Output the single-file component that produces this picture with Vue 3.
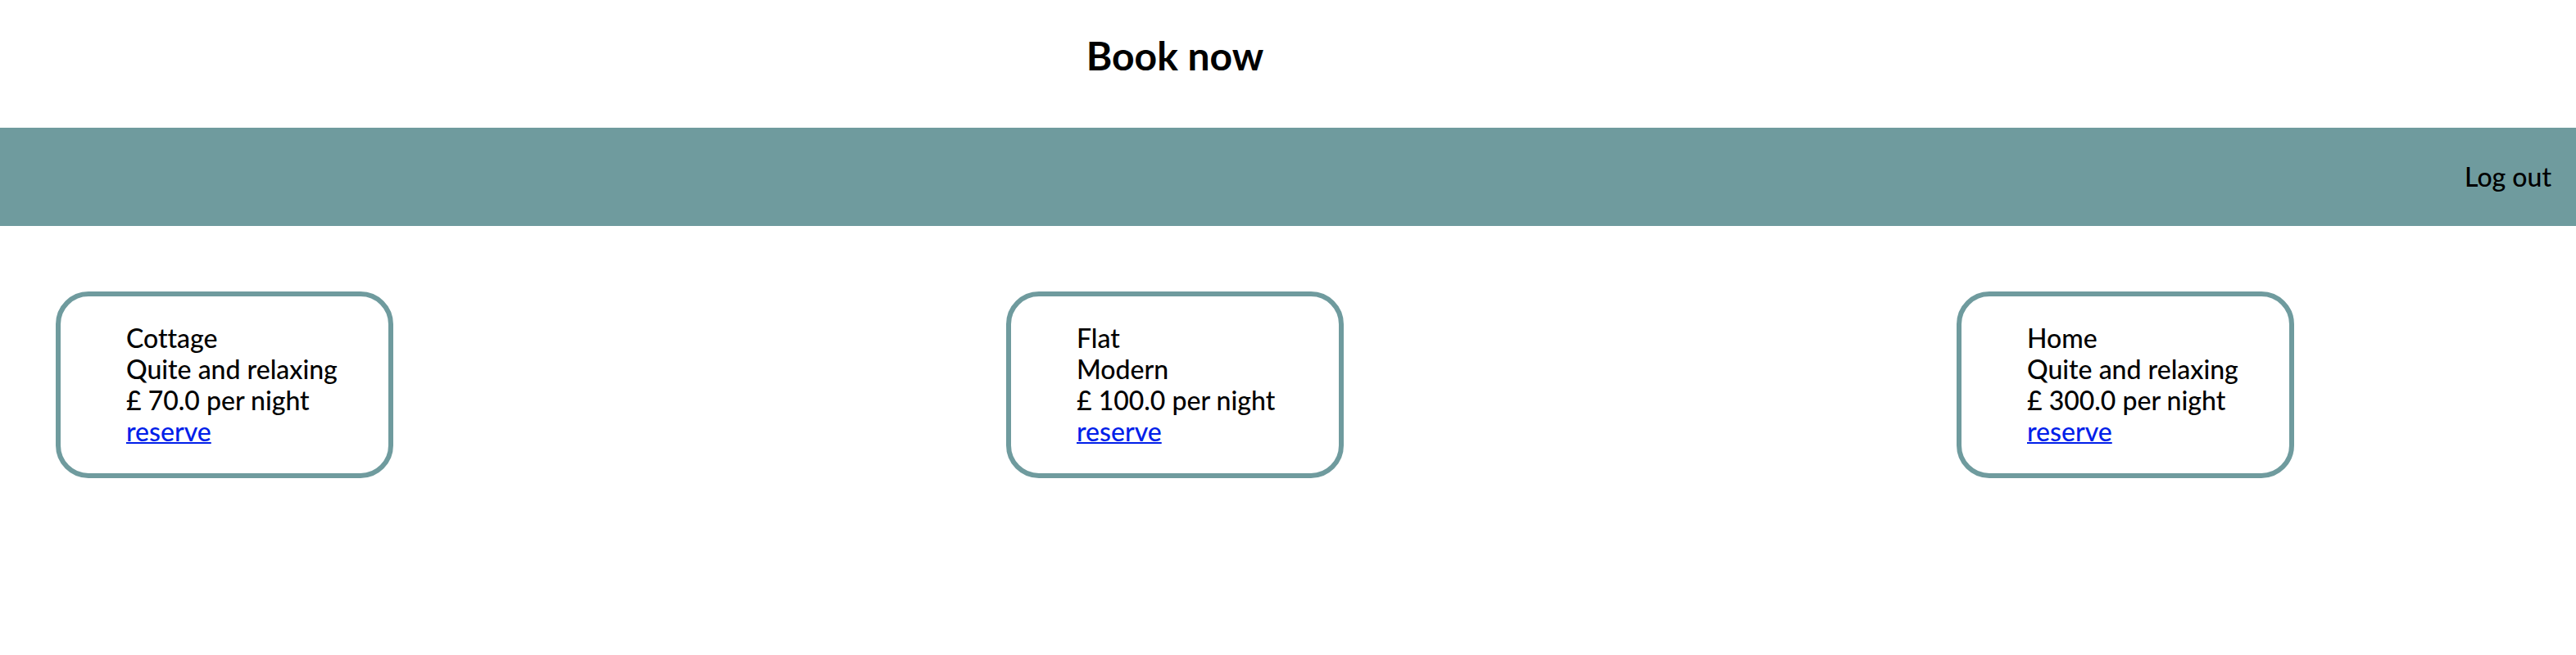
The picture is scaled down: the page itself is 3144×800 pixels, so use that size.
<script setup>
const rooms = [
  { id: 1, name: 'Cottage', description: 'Quite and relaxing', price: '70.0' },
  { id: 2, name: 'Flat', description: 'Modern', price: '100.0' },
  { id: 3, name: 'Home', description: 'Quite and relaxing', price: '300.0' },
]
</script>

<template>
  <div class="page">
    <header class="header">
      <h1 class="title">Book now</h1>
    </header>
    <nav class="bar">
      <a class="logout" href="#">Log out</a>
    </nav>
    <main class="rooms">
      <article v-for="room in rooms" :key="room.id" class="card">
        <div>{{ room.name }}</div>
        <div>{{ room.description }}</div>
        <div>£ {{ room.price }} per night</div>
        <a class="reserve" href="#">reserve</a>
      </article>
    </main>
  </div>
</template>

<style>
body {
  margin: 0;
  background: #ffffff;
}
</style>

<style scoped>
.page {
  font-family: "Trebuchet MS", Lato, "Open Sans", sans-serif;
  font-size: 32px;
  font-weight: 500;
  line-height: 38px;
  font-variant-ligatures: none;
  color: #000000;
}

.header {
  padding: 40px 276px 60px 0;
  text-align: center;
}

.title {
  margin: 0;
  font-size: 48px;
  line-height: 56px;
  font-weight: 700;
}

.bar {
  display: flex;
  align-items: center;
  justify-content: flex-end;
  min-height: 120px;
  padding: 0 30px;
  background: #6f9b9e;
}

.logout {
  color: #000000;
  text-decoration: none;
}

.rooms {
  display: grid;
  grid-template-columns: 290fr 290fr 189fr;
  padding: 80px 0 80px 68px;
}

.card {
  box-sizing: border-box;
  width: 412px;
  padding: 32px 32px 32px 80px;
  border: 6px solid #6f9b9e;
  border-radius: 40px;
  white-space: nowrap;
}

.reserve {
  color: #001ee9;
  text-decoration: underline;
  text-decoration-thickness: 2px;
}
</style>
